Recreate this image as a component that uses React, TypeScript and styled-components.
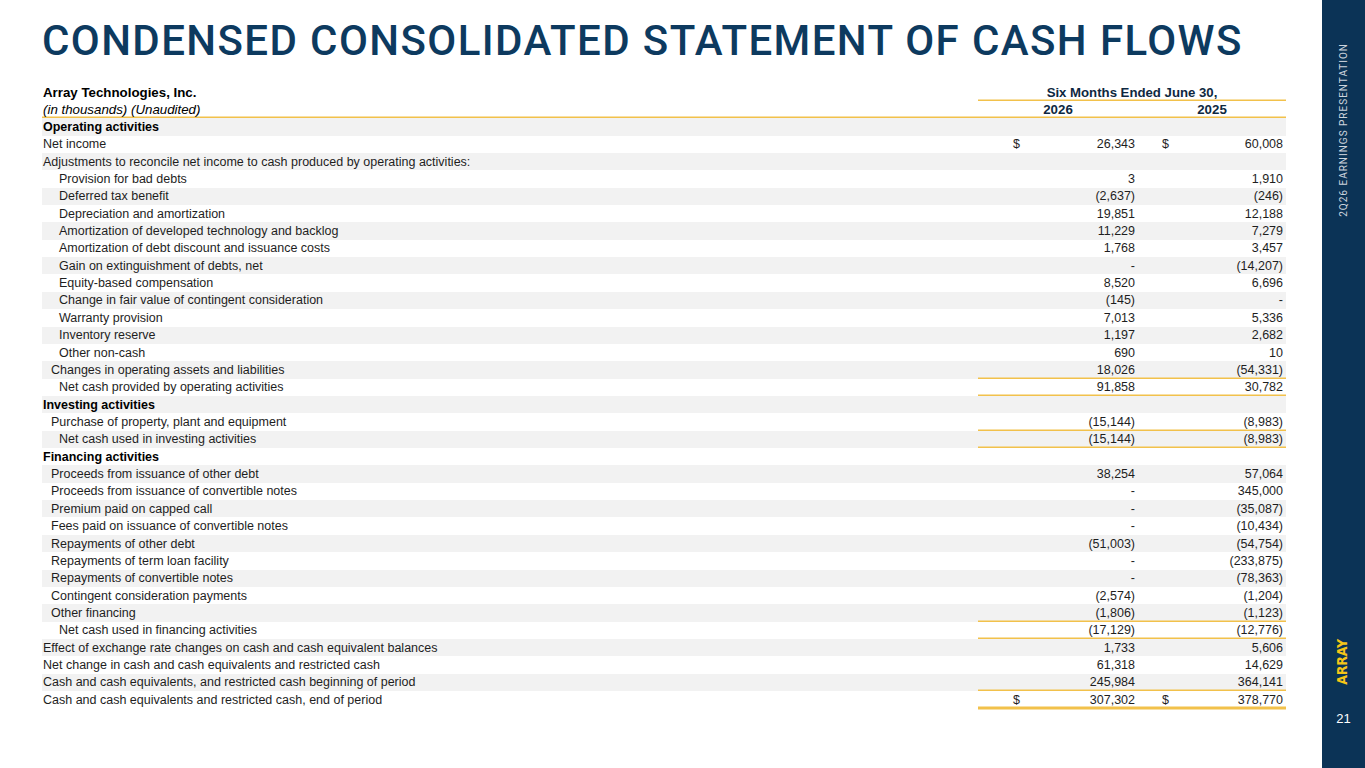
import React from 'react'
import styled, { createGlobalStyle } from 'styled-components'

const Colors = {
    navy: '#0b3356',
    title: '#0d3a5f',
    gold: '#f2c14b',
    stripe: '#f2f2f2',
    text: '#1e1e1e',
    header: '#0e2841',
    logo: '#f5c518',
}

type Line = {
    label: string
    indent?: number
    bold?: boolean
    a?: string
    b?: string
    dollar?: boolean
    rule?: 'single' | 'double'
}

const lines: Line[] = [
    { label: 'Operating activities', bold: true },
    { label: 'Net income', a: '26,343', b: '60,008', dollar: true },
    { label: 'Adjustments to reconcile net income to cash produced by operating activities:' },
    { label: 'Provision for bad debts', indent: 2, a: '3', b: '1,910' },
    { label: 'Deferred tax benefit', indent: 2, a: '(2,637)', b: '(246)' },
    { label: 'Depreciation and amortization', indent: 2, a: '19,851', b: '12,188' },
    { label: 'Amortization of developed technology and backlog', indent: 2, a: '11,229', b: '7,279' },
    { label: 'Amortization of debt discount and issuance costs', indent: 2, a: '1,768', b: '3,457' },
    { label: 'Gain on extinguishment of debts, net', indent: 2, a: '-', b: '(14,207)' },
    { label: 'Equity-based compensation', indent: 2, a: '8,520', b: '6,696' },
    { label: 'Change in fair value of contingent consideration', indent: 2, a: '(145)', b: '-' },
    { label: 'Warranty provision', indent: 2, a: '7,013', b: '5,336' },
    { label: 'Inventory reserve', indent: 2, a: '1,197', b: '2,682' },
    { label: 'Other non-cash', indent: 2, a: '690', b: '10' },
    { label: 'Changes in operating assets and liabilities', indent: 1, a: '18,026', b: '(54,331)', rule: 'single' },
    { label: 'Net cash provided by operating activities', indent: 2, a: '91,858', b: '30,782', rule: 'single' },
    { label: 'Investing activities', bold: true },
    { label: 'Purchase of property, plant and equipment', indent: 1, a: '(15,144)', b: '(8,983)', rule: 'single' },
    { label: 'Net cash used in investing activities', indent: 2, a: '(15,144)', b: '(8,983)', rule: 'single' },
    { label: 'Financing activities', bold: true },
    { label: 'Proceeds from issuance of other debt', indent: 1, a: '38,254', b: '57,064' },
    { label: 'Proceeds from issuance of convertible notes', indent: 1, a: '-', b: '345,000' },
    { label: 'Premium paid on capped call', indent: 1, a: '-', b: '(35,087)' },
    { label: 'Fees paid on issuance of convertible notes', indent: 1, a: '-', b: '(10,434)' },
    { label: 'Repayments of other debt', indent: 1, a: '(51,003)', b: '(54,754)' },
    { label: 'Repayments of term loan facility', indent: 1, a: '-', b: '(233,875)' },
    { label: 'Repayments of convertible notes', indent: 1, a: '-', b: '(78,363)' },
    { label: 'Contingent consideration payments', indent: 1, a: '(2,574)', b: '(1,204)' },
    { label: 'Other financing', indent: 1, a: '(1,806)', b: '(1,123)', rule: 'single' },
    { label: 'Net cash used in financing activities', indent: 2, a: '(17,129)', b: '(12,776)', rule: 'single' },
    { label: 'Effect of exchange rate changes on cash and cash equivalent balances', a: '1,733', b: '5,606' },
    { label: 'Net change in cash and cash equivalents and restricted cash', a: '61,318', b: '14,629' },
    { label: 'Cash and cash equivalents, and restricted cash beginning of period', a: '245,984', b: '364,141', rule: 'single' },
    { label: 'Cash and cash equivalents and restricted cash, end of period', a: '307,302', b: '378,770', dollar: true, rule: 'double' },
]

export default function App(): JSX.Element {
    const renderLines = () =>
        lines.map((line, i) => (
            <Row key={line.label} $striped={i % 2 === 0}>
                <Label $indent={line.indent ?? 0} $bold={line.bold}>
                    {line.label}
                </Label>
                <Value $rule={line.rule} $dollarAt={35}>
                    {line.dollar && <Dollar>$</Dollar>}
                    <span>{line.a}</span>
                </Value>
                <Value $rule={line.rule} $dollarAt={24}>
                    {line.dollar && <Dollar>$</Dollar>}
                    <span>{line.b}</span>
                </Value>
            </Row>
        ))

    return (
        <>
            <GlobalStyle />
            <Slide>
                <Main>
                    <Title>CONDENSED CONSOLIDATED STATEMENT OF CASH FLOWS</Title>
                    <Table>
                        <Row>
                            <HeaderLabel>Array Technologies, Inc.</HeaderLabel>
                            <PeriodHeading>Six Months Ended June 30,</PeriodHeading>
                        </Row>
                        <HeaderRow>
                            <HeaderLabel $italic>(in thousands) (Unaudited)</HeaderLabel>
                            <YearHeading>2026</YearHeading>
                            <YearHeading>2025</YearHeading>
                        </HeaderRow>
                        {renderLines()}
                    </Table>
                </Main>
                <Sidebar>
                    <Tagline>2Q26 EARNINGS PRESENTATION</Tagline>
                    <Logo>ARRAY</Logo>
                    <PageNumber>21</PageNumber>
                </Sidebar>
            </Slide>
        </>
    )
}

const GlobalStyle = createGlobalStyle`
    html, body {
        margin: 0;
        padding: 0;
        background: #ffffff;
    }
`

const Slide = styled.div`
    display: flex;
    width: 1365px;
    height: 768px;
    overflow: hidden;
    background: #ffffff;
`

const Main = styled.div`
    flex: 1;
    display: flex;
    flex-direction: column;
    padding: 0 36px 0 42px;
`

const Title = styled.h1`
    margin: 0;
    height: 83px;
    padding-top: 15px;
    box-sizing: border-box;

    font-family: 'Roboto', 'DejaVu Sans', sans-serif;
    font-weight: 500;
    font-size: 42px;
    line-height: 52px;
    letter-spacing: 1.4px;
    color: ${Colors.title};
    white-space: nowrap;
`

const Table = styled.div`
    display: flex;
    flex-direction: column;
    padding-top: 0.5px;

    font-family: 'Liberation Sans', Arial, sans-serif;
    font-size: 12.5px;
    color: ${Colors.text};
`

const Row = styled.div<{ $striped?: boolean }>`
    display: grid;
    grid-template-columns: 1fr 160px 148px;
    height: 17.36px;
    align-items: center;
    background-color: ${p => (p.$striped ? Colors.stripe : 'transparent')};
`

const HeaderRow = styled(Row)`
    box-shadow: inset 0 -1.5px 0 ${Colors.gold};
`

const Label = styled.div<{ $indent: number; $bold?: boolean }>`
    padding-left: ${p => 1 + p.$indent * 8}px;
    font-weight: ${p => (p.$bold ? 700 : 400)};
    color: ${p => (p.$bold ? '#000000' : Colors.text)};
    white-space: nowrap;
`

const HeaderLabel = styled.div<{ $italic?: boolean }>`
    padding-left: 1px;
    font-size: 13.3px;
    font-weight: ${p => (p.$italic ? 400 : 700)};
    font-style: ${p => (p.$italic ? 'italic' : 'normal')};
    color: #000000;
    white-space: nowrap;
`

const PeriodHeading = styled.div`
    grid-column: 2 / span 2;
    align-self: stretch;
    display: flex;
    align-items: center;
    justify-content: center;

    font-size: 13.2px;
    font-weight: 700;
    color: ${Colors.header};
    box-shadow: inset 0 -1.5px 0 ${Colors.gold};
`

const YearHeading = styled.div`
    text-align: center;
    font-size: 13.3px;
    font-weight: 700;
    color: ${Colors.header};
`

const Value = styled.div<{ $rule?: 'single' | 'double'; $dollarAt: number }>`
    position: relative;
    align-self: stretch;
    display: flex;
    align-items: center;
    justify-content: flex-end;
    padding-right: 3px;

    ${p => p.$rule === 'single' && `box-shadow: inset 0 -1.5px 0 ${Colors.gold};`}
    ${p => p.$rule === 'double' && `box-shadow: 0 1.5px 0 ${Colors.gold}, inset 0 -1.5px 0 ${Colors.gold};`}

    & > ${() => Dollar} {
        left: ${p => p.$dollarAt}px;
    }
`

const Dollar = styled.span`
    position: absolute;
    top: 50%;
    transform: translateY(-50%);
`

const Sidebar = styled.div`
    width: 43px;
    flex-shrink: 0;
    display: flex;
    flex-direction: column;
    align-items: center;
    padding-top: 43px;
    box-sizing: border-box;
    background-color: ${Colors.navy};
`

const Tagline = styled.div`
    writing-mode: vertical-rl;
    transform: rotate(180deg);

    font-family: 'Roboto', 'DejaVu Sans', sans-serif;
    font-size: 10px;
    letter-spacing: 1px;
    color: #cdd4dd;
    white-space: nowrap;
`

const Logo = styled.div`
    margin-top: auto;
    margin-right: 4px;
    writing-mode: vertical-rl;
    transform: rotate(180deg);

    font-family: 'Liberation Sans Narrow', 'DejaVu Sans Condensed', 'Liberation Sans', sans-serif;
    font-weight: 700;
    font-size: 14px;
    letter-spacing: -0.2px;
    color: ${Colors.logo};
`

const PageNumber = styled.div`
    margin: 26px 0 42px;
    font-family: 'Liberation Sans', sans-serif;
    font-size: 13px;
    color: #ffffff;
`
